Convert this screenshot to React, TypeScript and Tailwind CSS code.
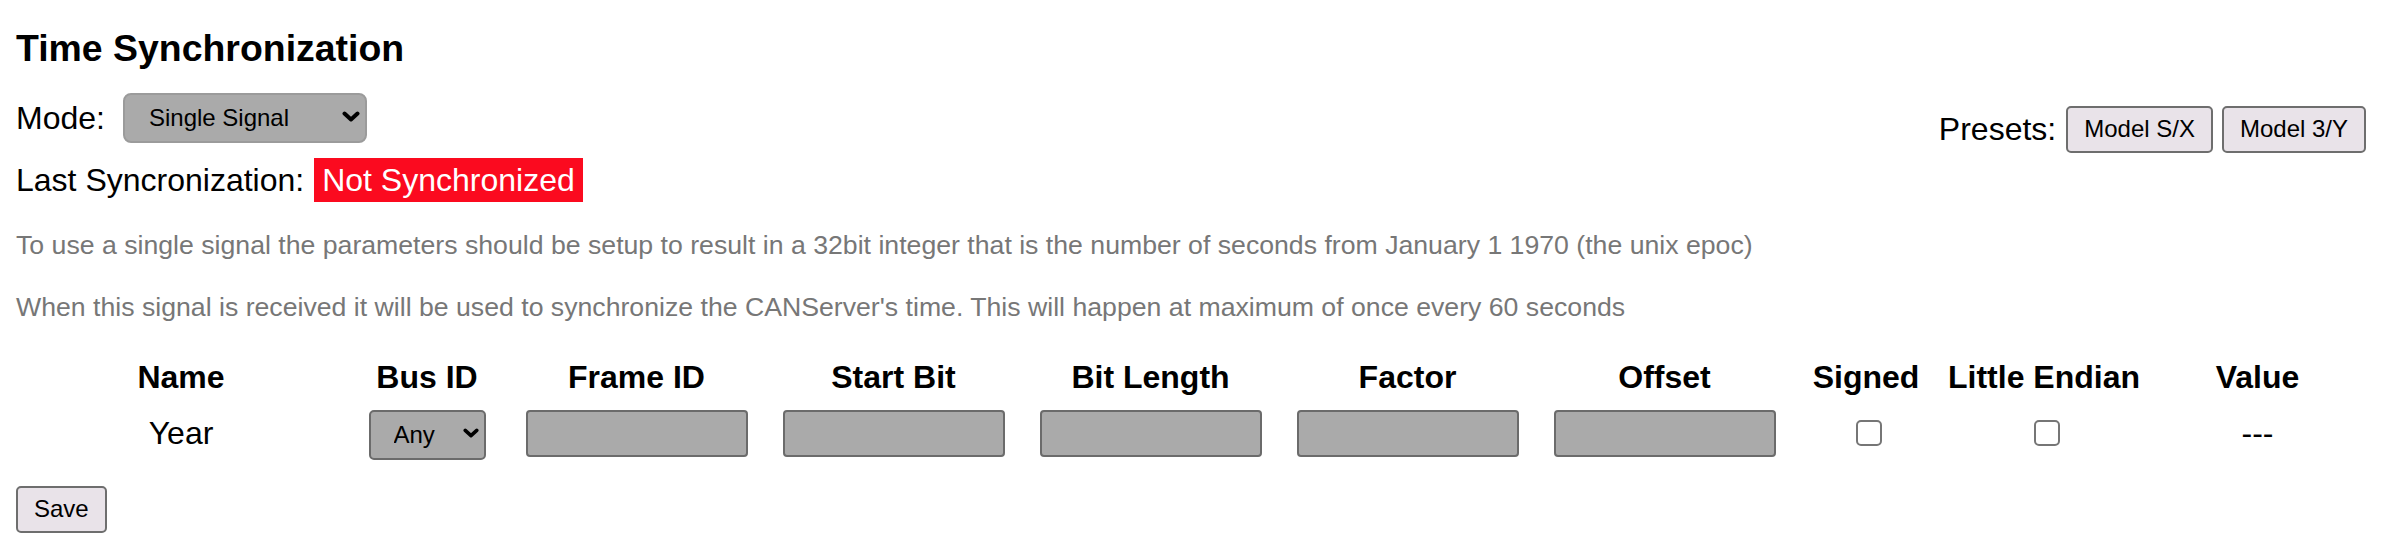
import React from "react";

const Chevron = ({ className }: { className: string }) => (
  <svg
    viewBox="0 0 18 11"
    className={className}
    fill="none"
    stroke="#000"
    strokeWidth={4}
    strokeLinecap="round"
    strokeLinejoin="round"
  >
    <path d="M2.5 2.5 L9 8.5 L15.5 2.5" />
  </svg>
);

const TextBox = () => (
  <input
    type="text"
    className="h-[47px] w-[222px] rounded-[4px] border-2 border-[#6b6b6b] bg-[#aaaaaa] px-2 text-[24px] outline-none"
  />
);

const Check = () => (
  <input
    type="checkbox"
    className="ml-[6px] h-[26px] w-[26px] appearance-none rounded-[5px] border-2 border-[#767676] bg-white"
  />
);

const Btn = ({ children }: { children: React.ReactNode }) => (
  <button className="h-[47px] rounded-[5px] border-2 border-[#6e6e6e] bg-[#e9e3e9] px-4 text-[24px] leading-[28px] text-black">
    {children}
  </button>
);

export default function App() {
  const headers = [
    "Name",
    "Bus ID",
    "Frame ID",
    "Start Bit",
    "Bit Length",
    "Factor",
    "Offset",
    "Signed",
    "Little Endian",
    "Value",
  ];
  return (
    <div className="h-[558px] overflow-hidden bg-white px-4 font-['Liberation_Sans',Arial,sans-serif] text-[32px] text-black">
      <h3 className="pt-[27px] text-[37.44px] font-bold leading-[43px]">Time Synchronization</h3>

      <div className="mt-[21px] flex justify-between">
        <div className="flex flex-col gap-[17px]">
          <div className="flex h-[50px] items-start">
            <span className="mt-[9px] leading-[37px]">Mode:</span>
            <div className="relative ml-[18px] h-[50px] w-[244px]">
              <select className="h-full w-full appearance-none rounded-[8px] border-2 border-[#9b9b9b] bg-[#aaaaaa] pl-[24px] text-[24px] text-black outline-none">
                <option>Single Signal</option>
                <option>Multiple Signals</option>
              </select>
              <Chevron className="pointer-events-none absolute right-[7px] top-[20px] h-[11px] w-[18px]" />
            </div>
          </div>
          <div className="flex h-[44px] items-center">
            <span className="leading-[36px]">Last Syncronization:</span>
            <span className="ml-[10px] bg-[#fb0a1f] px-[8px] py-[4px] leading-[36px] text-white">
              Not Synchronized
            </span>
          </div>
        </div>

        <div className="mt-[15px] flex h-[46px] items-center gap-[9px]">
          <span className="mr-[1px] leading-[37px]">Presets:</span>
          <Btn>Model S/X</Btn>
          <Btn>Model 3/Y</Btn>
        </div>
      </div>

      <p className="mt-[28px] text-[26.67px] leading-[30.6px] text-[#777777]">
        To use a single signal the parameters should be setup to result in a 32bit integer that is the number of
        seconds from January 1 1970 (the unix epoc)
      </p>
      <p className="mt-[31px] text-[26.67px] leading-[30.6px] text-[#777777]">
        When this signal is received it will be used to synchronize the CANServer's time. This will happen at
        maximum of once every 60 seconds
      </p>

      <div className="mt-[35px] grid grid-cols-[330px_162px_257px_257px_257px_257px_257px_146px_210px_217px] grid-rows-[40px_52px] items-center justify-items-center gap-y-[10px]">
        {headers.map((h) => (
          <div key={h} className="font-bold leading-[37px]">
            {h}
          </div>
        ))}
        <div className="leading-[37px]">Year</div>
        <div className="relative h-[50px] w-[117px]">
          <select className="h-full w-full appearance-none rounded-[5px] border-2 border-[#6b6b6b] bg-[#aaaaaa] pl-[23px] text-[24px] text-black outline-none">
            <option>Any</option>
            <option>0</option>
            <option>1</option>
          </select>
          <Chevron className="pointer-events-none absolute right-[7px] top-[20px] h-[10px] w-[16px]" />
        </div>
        <TextBox />
        <TextBox />
        <TextBox />
        <TextBox />
        <TextBox />
        <Check />
        <Check />
        <div className="leading-[37px]">---</div>
      </div>

      <div className="mt-[23px]">
        <Btn>Save</Btn>
      </div>
    </div>
  );
}
